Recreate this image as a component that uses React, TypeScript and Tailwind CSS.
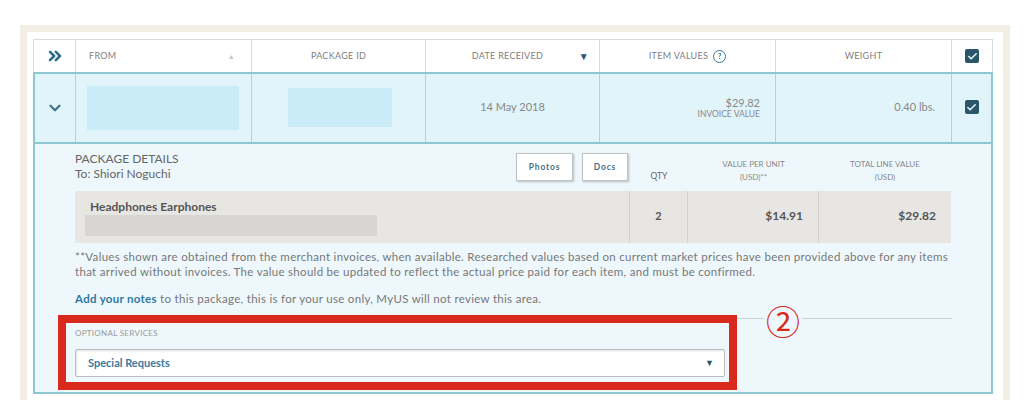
import React from 'react';
import { ChevronsRight, ChevronDown, Check } from 'lucide-react';

const font = { fontFamily: 'Lato, "Noto Sans", sans-serif' };

const CheckBox = () => (
  <div className="w-[14px] h-[14px] rounded-[2px] bg-[#2b5669] flex items-center justify-center">
    <Check size={11} strokeWidth={3.5} className="text-[#dff3f8]" />
  </div>
);

export default function App() {
  return (
    <div className="w-[1024px] h-[407px] bg-white pt-[25px] pl-[20px]" style={font}>
      <div className="w-[990px] h-[375px] bg-[#f2eee4] pt-[7px] pl-[7px]">
        <div className="w-[976px] h-[368px] bg-white pt-[7px] pl-[6px]">
          {/* header row */}
          <div className="flex w-[960px] h-[33px] border border-b-0 border-[#d6dde0] text-[9px] tracking-[0.3px] text-[#808080] uppercase">
            <div className="w-[42px] flex items-center justify-center border-r border-[#d6dde0]">
              <ChevronsRight size={20} strokeWidth={3} className="text-[#2d6d8b]" />
            </div>
            <div className="w-[176px] flex items-center justify-between pl-[13px] pr-[16px] border-r border-[#d6dde0]">
              <span>From</span>
              <span className="text-[7px] text-[#c4c4c4]">▲</span>
            </div>
            <div className="w-[174px] flex items-center justify-center border-r border-[#d6dde0]">Package ID</div>
            <div className="w-[174px] flex items-center border-r border-[#d6dde0] pl-[10px] pr-[10px]">
              <span className="flex-1 text-center">Date Received</span>
              <span className="text-[10px] text-[#2b5669]">▼</span>
            </div>
            <div className="w-[176px] flex items-center justify-center gap-[5px] border-r border-[#d6dde0]">
              <span>Item Values</span>
              <span className="w-[13px] h-[13px] rounded-full border border-[#3b7690] text-[#3b7690] text-[8px] font-bold flex items-center justify-center">?</span>
            </div>
            <div className="w-[176px] flex items-center justify-center border-r border-[#d6dde0]">Weight</div>
            <div className="flex-1 flex items-center justify-center">
              <CheckBox />
            </div>
          </div>

          {/* selected group */}
          <div className="w-[960px] border-2 border-[#8fc6d4]">
            <div className="flex h-[68px] bg-[#e1f4fa] text-[#888] text-[11px]">
              <div className="w-[41px] flex items-center justify-center border-r border-[#a9d6e1]">
                <ChevronDown size={18} strokeWidth={3} className="text-[#3b7590]" />
              </div>
              <div className="w-[176px] border-r border-[#a9d6e1] pl-[11px] pr-[12px] pt-[12px]">
                <div className="h-[44px] bg-[#c9ecf8]" />
              </div>
              <div className="w-[174px] border-r border-[#a9d6e1] pl-[36px] pr-[33px] pt-[14px]">
                <div className="h-[39px] bg-[#c9ecf8]" />
              </div>
              <div className="w-[174px] border-r border-[#a9d6e1] flex items-center justify-center pb-[2px]">14 May 2018</div>
              <div className="w-[176px] border-r border-[#a9d6e1] flex flex-col items-end justify-center pr-[15px]">
                <span className="leading-[13px]">$29.82</span>
                <span className="text-[8.5px] uppercase leading-[11px]">Invoice Value</span>
              </div>
              <div className="w-[176px] border-r border-[#a9d6e1] flex items-center justify-end pr-[16px] pb-[2px]">0.40 lbs.</div>
              <div className="flex-1 flex items-center justify-center pb-[2px]">
                <CheckBox />
              </div>
            </div>

            {/* details */}
            <div className="relative border-t-2 border-[#8fc6d4] bg-[#eef8fc] pl-[40px] pt-[5px] pb-[15px]">
              <div className="flex w-[876px] items-end h-[40px] text-[#666]">
                <div className="w-[555px] h-full flex items-start justify-between pr-[2px]">
                  <div className="text-[12px] leading-[15px] pt-[2px] text-[#666]">
                    <div>PACKAGE DETAILS</div>
                    <div>To: Shiori Noguchi</div>
                  </div>
                  <div className="flex gap-[9px] pt-[4px]">
                    <div className="w-[57px] h-[28px] bg-white border border-[#bfc3c5] shadow-[1px_1px_2px_rgba(0,0,0,0.25)] flex items-center justify-center text-[8.5px] font-bold tracking-[0.8px] text-[#4b6f87]">Photos</div>
                    <div className="w-[46px] h-[28px] bg-white border border-[#bfc3c5] shadow-[1px_1px_2px_rgba(0,0,0,0.25)] flex items-center justify-center text-[8.5px] font-bold tracking-[0.8px] text-[#4b6f87]">Docs</div>
                  </div>
                </div>
                <div className="w-[58px] text-center text-[8.5px] pb-[6px]">QTY</div>
                <div className="w-[131px] text-center text-[8px] leading-[13px] pb-[5px] text-[#888]">
                  <div>VALUE PER UNIT</div>
                  <div>(USD)**</div>
                </div>
                <div className="w-[132px] text-center text-[8px] leading-[13px] pb-[5px] text-[#888]">
                  <div>TOTAL LINE VALUE</div>
                  <div>(USD)</div>
                </div>
              </div>

              <div className="flex w-[876px] h-[52px] mt-[2px] bg-[#e8e6e2] text-[#555]">
                <div className="w-[555px] border-r border-[#d5d2cd] pl-[10px] pr-[252px] pt-[9px]">
                  <div className="text-[12px] font-bold leading-[14px] pl-[5px] text-[#555]">Headphones Earphones</div>
                  <div className="h-[21px] mt-[1px] bg-[#d8d6d2]" />
                </div>
                <div className="w-[58px] border-r border-[#d5d2cd] flex items-center justify-center text-[11px] font-bold pb-[2px]">2</div>
                <div className="w-[131px] border-r border-[#d5d2cd] flex items-center justify-end pr-[15px] text-[12px] font-bold pb-[2px]">$14.91</div>
                <div className="w-[132px] flex items-center justify-end pr-[15px] text-[12px] font-bold pb-[2px]">$29.82</div>
              </div>

              <p className="w-[876px] mt-[6px] text-[11.5px] tracking-[0.3px] leading-[15px] text-[#777]">
                **Values shown are obtained from the merchant invoices, when available. Researched values based on current market prices have been provided above for any items that arrived without invoices. The value should be updated to reflect the actual price paid for each item, and must be confirmed.
              </p>
              <p className="mt-[13px] text-[11.5px] tracking-[0.3px] leading-[14px] text-[#777]">
                <span className="font-bold text-[#2e78a3]">Add your notes</span> to this package, this is for your use only, MyUS will not review this area.
              </p>

              <div className="w-[877px] mt-[12px] border-t border-[#c8d3d6]" />
              <div className="mt-[8px] text-[8px] tracking-[0.3px] text-[#999]">OPTIONAL SERVICES</div>
              <div className="w-[650px] h-[28px] mt-[10px] bg-white border border-[#b9bdbf] rounded-[2px] shadow-[inset_1px_1px_2px_rgba(0,0,0,0.12)] flex items-center justify-between pl-[12px] pr-[10px]">
                <span className="text-[11px] font-bold text-[#3b7aa0]">Special Requests</span>
                <span className="text-[9px] text-[#2b5669]">▼</span>
              </div>

              {/* annotation overlay */}
              <div className="absolute left-[23px] top-[171px] w-[679px] h-[75px] border-[8px] border-[#d9291c] pointer-events-none" />
              <div
                className="absolute left-[729px] top-[160px] text-[34px] leading-none text-[#d9291c] bg-[#eef8fc] px-[2px]"
                style={{ fontFamily: '"Noto Sans CJK JP", "DejaVu Sans", sans-serif' }}
              >
                ②
              </div>
            </div>
          </div>
        </div>
      </div>
    </div>
  );
}
